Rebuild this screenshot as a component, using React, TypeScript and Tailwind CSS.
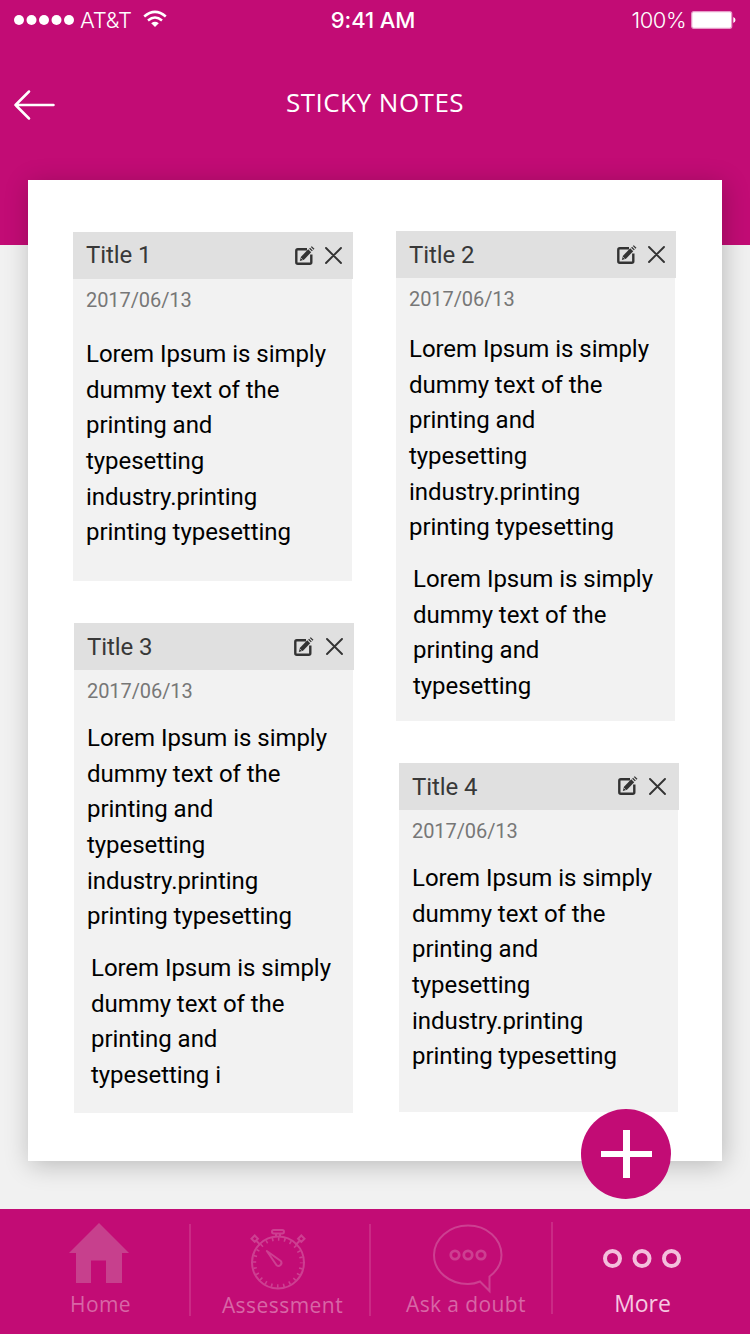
import React from "react";

type Note = {
  title: string;
  first: string[];
  second?: string[];
  titleText: string;
  textTop: string;
  body: string;
  icons: string;
  edit: string;
};

const LOREM = [
  "Lorem Ipsum is simply",
  "dummy text of the",
  "printing and",
  "typesetting",
  "industry.printing",
  "printing typesetting",
];

const leftNotes: Note[] = [
  {
    title: "Title 1",
    first: LOREM,
    titleText: "pb-[1px]",
    textTop: "pt-[26px]",
    body: "h-[302px]",
    icons: "pr-[11px] gap-[10px]",
    edit: "mt-0",
  },
  {
    title: "Title 3",
    first: LOREM,
    second: ["Lorem Ipsum is simply", "dummy text of the", "printing and", "typesetting i"],
    titleText: "pb-0",
    textTop: "pt-[19px]",
    body: "h-[443px]",
    icons: "pr-[11px] gap-[12px]",
    edit: "mt-0",
  },
];

const rightNotes: Note[] = [
  {
    title: "Title 2",
    first: LOREM,
    second: ["Lorem Ipsum is simply", "dummy text of the", "printing and", "typesetting"],
    titleText: "pb-0",
    textTop: "pt-[22px]",
    body: "h-[443px]",
    icons: "pr-[11px] gap-[11px]",
    edit: "mt-[1px]",
  },
  {
    title: "Title 4",
    first: LOREM,
    titleText: "pb-0",
    textTop: "pt-[19px]",
    body: "h-[302px]",
    icons: "pr-[13px] gap-[11px]",
    edit: "-mt-[2px]",
  },
];

function EditIcon({ className }: { className: string }) {
  return (
    <svg width="20" height="20" viewBox="0 0 20 20" fill="none" className={className}>
      <path d="M12 3.200H2.800Q1.300 3.200 1.300 4.700V16.300Q1.300 17.800 2.800 17.800H14.800Q16.300 17.800 16.300 16.300V8.500" stroke="#333" strokeWidth="2.400" />
      <path d="M4.800 15L6 10.800L13.200 3.200L16.200 6.200L9 13.700Z" fill="#333" />
      <path d="M14.600 2.200L17.300 4.900M16.300 .6L19 3.300" stroke="#333" strokeWidth="1.300" />
      <path d="M6.300 12.300L7.500 13.500" stroke="#e0e0e0" strokeWidth=".9" />
    </svg>
  );
}

function CloseIcon() {
  return (
    <svg width="17" height="17" viewBox="0 0 17 17" fill="none" stroke="#333" strokeWidth="1.9" strokeLinecap="round">
      <path d="M1 1L16 16M16 1L1 16" />
    </svg>
  );
}

function Lines({ lines }: { lines: string[] }) {
  return (
    <>
      {lines.map((line) => (
        <div key={line}>{line}</div>
      ))}
    </>
  );
}

function NoteCard({ note }: { note: Note }) {
  return (
    <article className="w-[280px]">
      <header className="flex h-[47px] items-center justify-between bg-[#e0e0e0] pl-[13px]">
        <h2 className={`text-[24px] leading-[28px] tracking-[-0.1px] text-[#383838] ${note.titleText}`}>{note.title}</h2>
        <div className={`flex items-center ${note.icons}`}>
          <EditIcon className={note.edit} />
          <CloseIcon />
        </div>
      </header>
      <div className={`w-[279px] bg-[#f2f2f2] pl-[13px] pt-[8px] ${note.body}`}>
        <time className="block h-6 text-[20px] leading-[26px] tracking-[-0.08px] text-[#777]">2017/06/13</time>
        <div className={`whitespace-nowrap text-[24px] leading-[35.65px] tracking-[-0.05px] text-black ${note.textTop}`}>
          <Lines lines={note.first} />
          {note.second && (
            <div className="pl-1 pt-4">
              <Lines lines={note.second} />
            </div>
          )}
        </div>
      </div>
    </article>
  );
}

function StatusBar() {
  return (
    <div className="flex h-[41px] items-center justify-between pl-[14px] pr-[14px] font-[Inter,sans-serif] text-[21px]">
      <div className="flex w-[200px] items-center">
        <svg width="61" height="12" fill="#fff" className="-mt-[2px]">
          <circle cx="5" cy="6" r="5" />
          <circle cx="17.5" cy="6" r="5" />
          <circle cx="30" cy="6" r="5" />
          <circle cx="42.5" cy="6" r="5" />
          <circle cx="55" cy="6" r="5" />
        </svg>
        <span className="ml-[5px] w-[52px] text-[22px] font-light tracking-[-0.2px]">AT&amp;T</span>
        <svg width="24" height="18" viewBox="0 0 24 18" fill="none" stroke="#fff" strokeWidth="2.5" className="-mt-[3px] ml-[11px]">
          <path d="M1.200 6.500Q12 -2.800 22.800 6.500M5 10.500Q12 4.600 19 10.500" />
          <path d="M12 17L8.200 13.200Q12 10.300 15.800 13.200Z" fill="#fff" stroke="none" />
        </svg>
      </div>
      <span className="pr-[4px] text-[22px] font-medium tracking-[-0.1px]">9:41 AM</span>
      <div className="flex w-[200px] items-center justify-end">
        <span className="text-[22px] font-light tracking-[-0.5px]">100%</span>
        <svg width="45" height="18" viewBox="0 0 45 18" className="-mt-[1px] ml-[5px]">
          <rect x=".7" y=".7" width="40" height="16.600" rx="2" fill="#fff" stroke="#e79bc8" strokeWidth="1.200" />
          <path d="M42.300 6Q44.500 7 44.500 9T42.300 12Z" fill="#fff" />
        </svg>
      </div>
    </div>
  );
}

function Stopwatch() {
  return (
    <svg width="56" height="62" viewBox="0 0 56 62" fill="none" stroke="#cd3f91" strokeWidth="2">
      <circle cx="28" cy="34.500" r="26" />
      <circle cx="28" cy="34.500" r="23.500" strokeWidth="3.400" strokeDasharray="1.600 4.553" strokeDashoffset=".8" />
      <rect x="22" y="2" width="12" height="3.500" rx="1.700" />
      <path d="M26 5.500V9M30 5.500V9M6.500 13L10.500 17M49.500 13L45.500 17" />
      <path d="M1.500 10.700L4.700 7.500L7.900 10.700L4.700 13.900ZM48.100 10.700L51.300 7.500L54.500 10.700L51.300 13.900Z" />
      <path d="M16.800 23L30.800 33A3 3 0 0 1 26.600 37.200Z" strokeLinejoin="round" />
    </svg>
  );
}

function BottomBar() {
  return (
    <nav className="flex h-[125px] whitespace-nowrap bg-[#c20c75] font-['Open_Sans',sans-serif] text-[21px] leading-[28px] text-[#d866a6]">
      <div className="flex w-[189px] flex-col items-center pl-[9px] pt-[14px]">
        <svg width="60" height="61" viewBox="0 0 60 61" fill="#c7408d">
          <path d="M30 0L60 30H53V60H37V37.500H22V60H7V30H0Z" />
        </svg>
        <span className="mt-[6px] pl-[3px] font-medium tracking-[.4px]">Home</span>
      </div>
      <div className="mt-[15px] h-[92px] w-[2px] bg-[#ca2a85]" />
      <div className="flex w-[178px] flex-col items-center pt-[19px]">
        <div className="pr-[4px]">
          <Stopwatch />
        </div>
        <span className="mt-[1px] pl-[5px] font-medium tracking-[.45px]">Assessment</span>
      </div>
      <div className="mt-[15px] h-[92px] w-[2px] bg-[#ca2a85]" />
      <div className="flex w-[180px] flex-col items-center pl-[10px] pt-[15px]">
        <svg width="70" height="70" viewBox="0 0 70 70" fill="none" stroke="#cd3f91" strokeWidth="2" className="ml-[3px]">
          <path d="M35 1.500C16.300 1.500 1 14.700 1 31S16.300 60 35 60Q41.500 60 47 57.500L56.500 67V52.500Q68.500 43.500 68.500 31C68.500 14.700 54 1.500 35 1.500Z" />
          <g strokeWidth="2.800">
            <circle cx="22" cy="31" r="4.200" />
            <circle cx="35" cy="31" r="4.200" />
            <circle cx="48" cy="31" r="4.200" />
          </g>
        </svg>
        <span className="-mt-[4px] font-medium tracking-[.4px]">Ask a doubt</span>
      </div>
      <div className="mt-[13px] h-[92px] w-[2px] bg-[#ca2a85]" />
      <div className="flex flex-1 flex-col items-center pr-[20px] pt-[39px] text-[#f6c8e1]">
        <svg width="80" height="20" viewBox="0 0 80 20" fill="none" stroke="#f3bfdc" strokeWidth="4">
          <circle cx="10.500" cy="10.500" r="7.500" />
          <circle cx="40" cy="10.500" r="7.500" />
          <circle cx="69.500" cy="10.500" r="7.500" />
        </svg>
        <span className="mt-[21px] pl-[2px] text-[23px] tracking-[-0.1px]">More</span>
      </div>
    </nav>
  );
}

export default function App() {
  return (
    <div className="flex h-[1334px] w-[750px] flex-col overflow-hidden bg-[#f1f1f1] font-[Roboto,sans-serif]">
      <div className="h-[245px] shrink-0 bg-[#c20c75] text-white">
        <StatusBar />
        <div className="flex h-[124px] items-center px-[14px]">
          <svg width="41" height="30" viewBox="0 0 41 30" fill="none" stroke="#fff" strokeWidth="2.500" strokeLinecap="round" strokeLinejoin="round" className="mt-[3px]">
            <path d="M15 1.500L1.500 15L15 28.500M1.500 15H39.500" />
          </svg>
          <h1 className="flex-1 pb-[2px] pr-[41px] text-center font-['Open_Sans',sans-serif] text-[26px] font-medium tracking-[.5px]">STICKY NOTES</h1>
        </div>
      </div>
      <main className="relative mx-[28px] -mt-[65px] flex h-[981px] shrink-0 gap-[42px] bg-white pl-[45px] shadow-[2px_4px_24px_rgba(0,0,0,0.23)]">
        <div className="flex flex-col gap-[42px] pt-[52px]">
          <NoteCard note={leftNotes[0]} />
          <div className="pl-[1px]">
            <NoteCard note={leftNotes[1]} />
          </div>
        </div>
        <div className="flex flex-col gap-[42px] pt-[51px]">
          <NoteCard note={rightNotes[0]} />
          <div className="pl-[3px]">
            <NoteCard note={rightNotes[1]} />
          </div>
        </div>
        <button aria-label="Add note" className="absolute -bottom-[38px] right-[51px] flex size-[90px] items-center justify-center rounded-full bg-[#c20c75]">
          <svg width="52" height="50" viewBox="0 0 52 50" fill="#fff">
            <path d="M23 1H30V22H52V28H30V49H23V28H1V22H23Z" />
          </svg>
        </button>
      </main>
      <div className="h-[48px] shrink-0" />
      <BottomBar />
    </div>
  );
}
